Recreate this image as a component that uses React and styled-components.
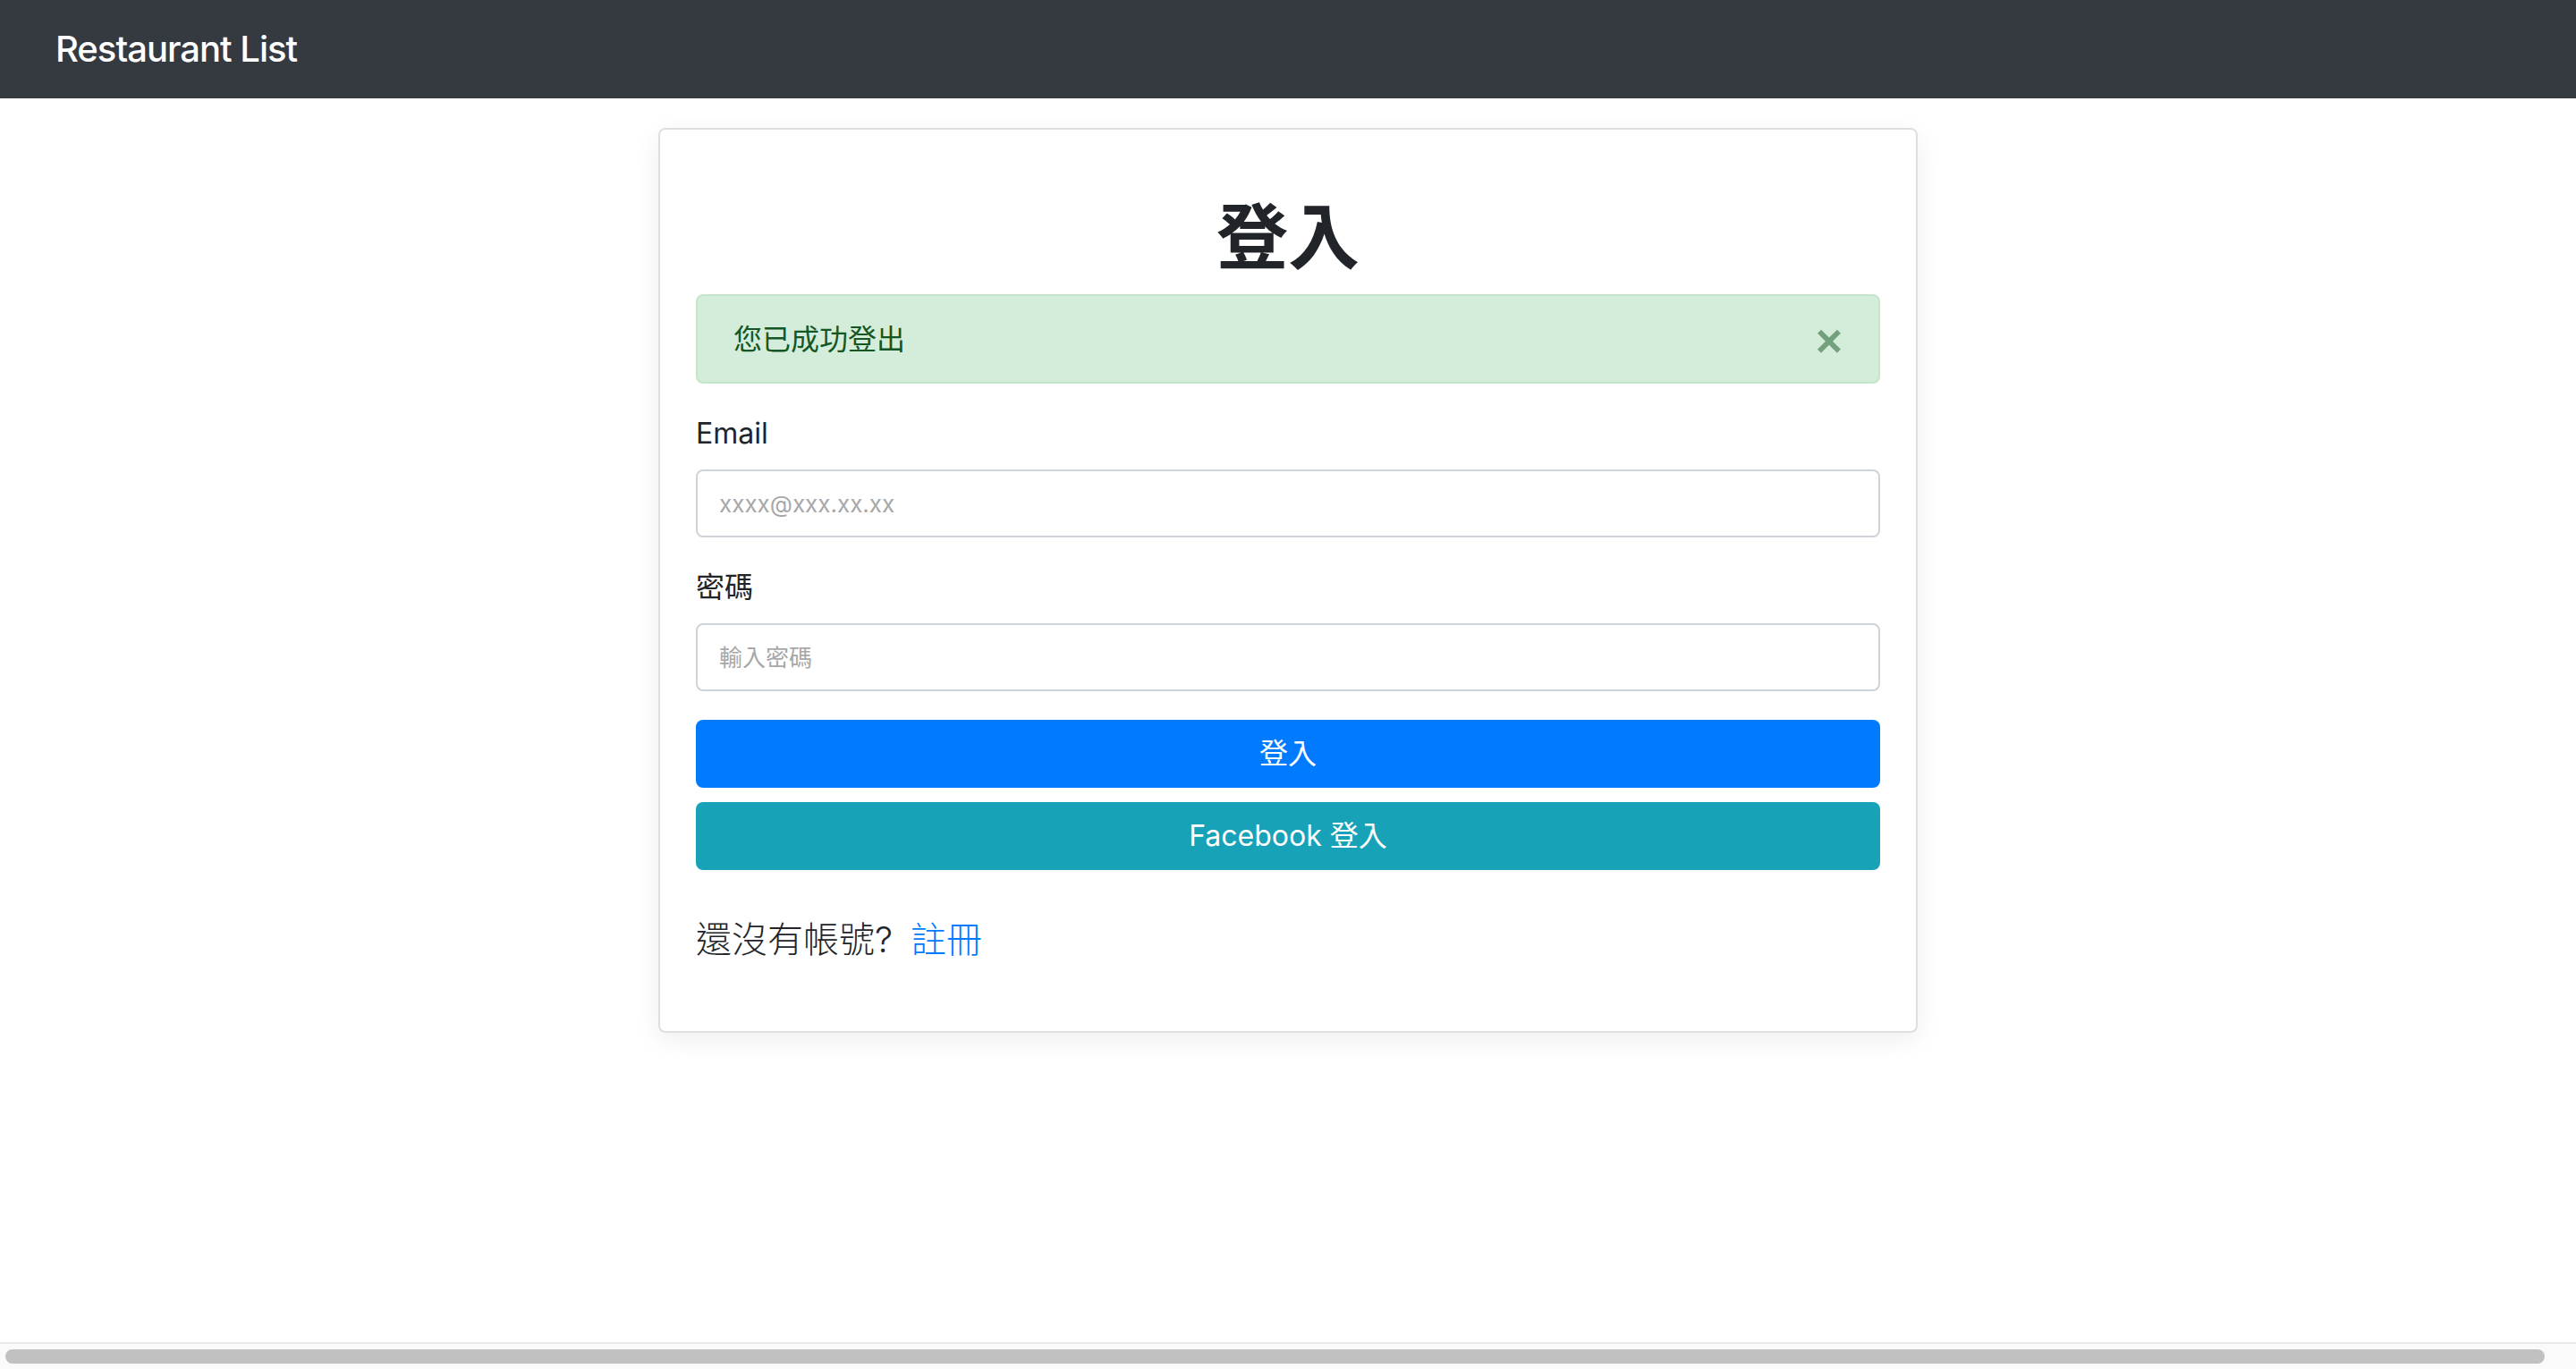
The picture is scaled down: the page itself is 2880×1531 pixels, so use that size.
import React from "react";
import styled, { createGlobalStyle } from "styled-components";

const Global = createGlobalStyle`
  html, body { margin: 0; padding: 0; background: #fff; }
  body {
    font-family: Inter, "Noto Sans CJK TC", "Noto Sans", sans-serif;
    color: #212529;
    overflow: hidden;
  }
  * { box-sizing: border-box; }
`;

const Page = styled.div`
  width: 100%;
  min-height: 1531px;
`;

const Navbar = styled.nav`
  height: 110px;
  background: #343a40;
  display: flex;
  align-items: center;
  padding: 0 62px;
`;

const Brand = styled.a`
  color: #fff;
  font-size: 40px;
  font-weight: 500;
  line-height: 60px;
  text-decoration: none;
  letter-spacing: -1px;
`;

const Main = styled.main`
  display: flex;
  justify-content: center;
  padding-top: 33px;
`;

const Card = styled.section`
  width: 1408px;
  background: #fff;
  border: 2px solid rgba(0, 0, 0, 0.125);
  border-radius: 8px;
  box-shadow: 0 8px 28px rgba(0, 0, 0, 0.07);
  padding: 72px 40px 40px;
  display: flex;
  flex-direction: column;
`;

const Title = styled.h1`
  margin: 0 0 16px;
  text-align: center;
  font-size: 80px;
  line-height: 96px;
  font-weight: 700;
  color: #212529;
`;

const Alert = styled.div`
  position: relative;
  height: 100px;
  background: #d4edda;
  border: 2px solid #c3e6cb;
  border-radius: 8px;
  color: #155724;
  font-size: 32px;
  line-height: 48px;
  padding: 25px 40px 19px;
  margin-bottom: 32px;
`;

const Close = styled.button`
  position: absolute;
  top: 0;
  right: 0;
  height: 96px;
  padding: 0 40px;
  background: transparent;
  border: 0;
  color: #155724;
  opacity: 0.5;
  font-family: "Liberation Sans", Arial, sans-serif;
  font-size: 52px;
  font-weight: 700;
  line-height: 100px;
  cursor: pointer;
`;

const FormGroup = styled.div`
  display: flex;
  flex-direction: column;
  margin-bottom: 32px;
`;

const Label = styled.label`
  font-size: 32px;
  line-height: 48px;
  margin-bottom: 16px;
  color: #212529;
`;

const Input = styled.input`
  height: 76px;
  border: 2px solid #ced4da;
  border-radius: 8px;
  padding: 0 24px;
  font-family: Inter, "Noto Sans CJK TC", sans-serif;
  font-size: 26px;
  color: #495057;
  outline: none;
  &::placeholder { color: #a8a8a8; }
`;

const Button = styled.button`
  height: 76px;
  width: 100%;
  border: 0;
  border-radius: 8px;
  background: ${(p) => (p.$variant === "info" ? "#17a2b8" : "#007bff")};
  color: #fff;
  font-family: Inter, "Noto Sans CJK TC", sans-serif;
  font-size: 32px;
  line-height: 48px;
  cursor: pointer;
  & + & { margin-top: 16px; }
`;

const Lead = styled.p`
  margin: 48px 0 32px;
  font-size: 40px;
  line-height: 60px;
  font-weight: 300;
  color: #212529;
`;

const Link = styled.a`
  color: #007bff;
  text-decoration: none;
  margin-left: 20px;
`;

const ScrollTrack = styled.div`
  position: fixed;
  left: 0;
  right: 0;
  bottom: 0;
  height: 30px;
  background: #fafafa;
  border-top: 2px solid #e8e8e8;
  display: flex;
  align-items: center;
  padding: 0 35px 0 6px;
`;

const ScrollThumb = styled.div`
  flex: 1;
  height: 16px;
  border-radius: 8px;
  background: #c1c1c1;
`;

export default function App() {
  return (
    <Page>
      <Global />
      <Navbar>
        <Brand href="#">Restaurant List</Brand>
      </Navbar>
      <Main>
        <Card>
          <Title>登入</Title>
          <Alert>
            您已成功登出
            <Close aria-label="Close">×</Close>
          </Alert>
          <FormGroup>
            <Label htmlFor="email">Email</Label>
            <Input id="email" type="email" placeholder="xxxx@xxx.xx.xx" />
          </FormGroup>
          <FormGroup>
            <Label htmlFor="password">密碼</Label>
            <Input id="password" type="password" placeholder="輸入密碼" />
          </FormGroup>
          <Button>登入</Button>
          <Button $variant="info">Facebook 登入</Button>
          <Lead>
            還沒有帳號?<Link href="#">註冊</Link>
          </Lead>
        </Card>
      </Main>
      <ScrollTrack>
        <ScrollThumb />
      </ScrollTrack>
    </Page>
  );
}
